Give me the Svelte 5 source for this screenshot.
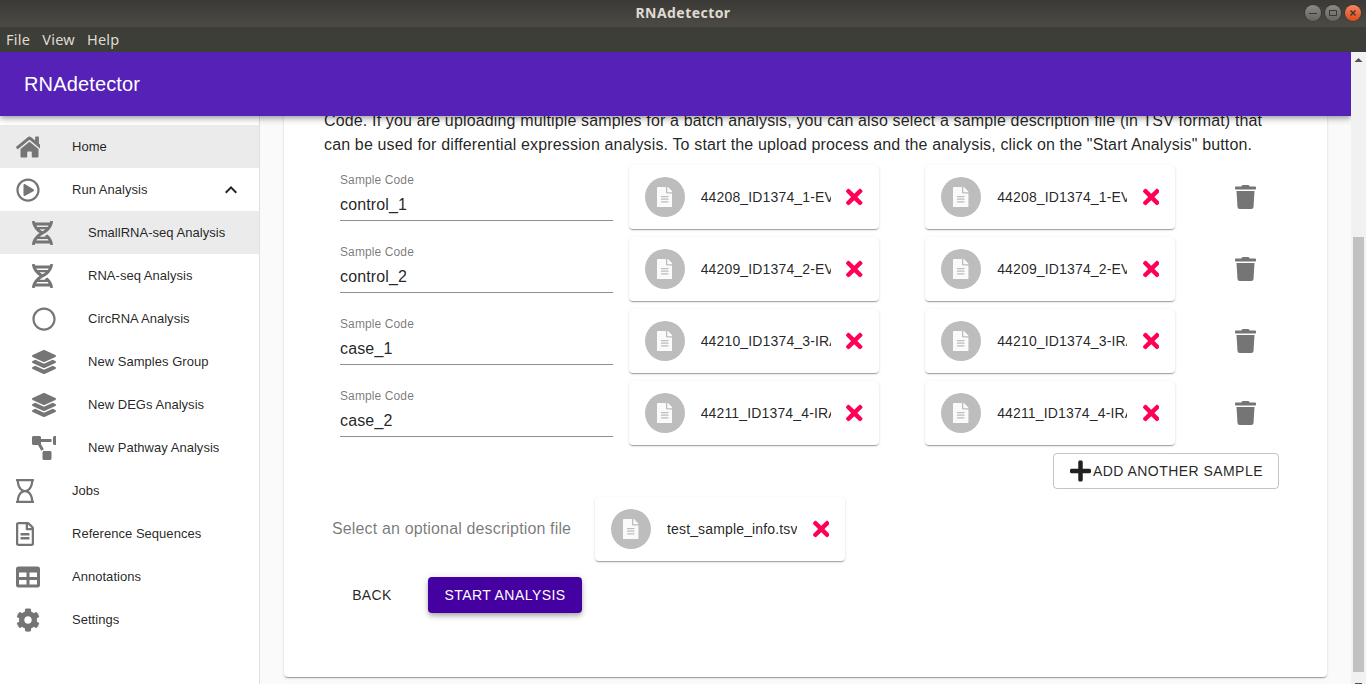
<script>
  const icons = {
    home: [576, 'M280.37 148.26L96 300.11V464a16 16 0 0 0 16 16l112.06-.29a16 16 0 0 0 15.92-16V368a16 16 0 0 1 16-16h64a16 16 0 0 1 16 16v95.64a16 16 0 0 0 16 16.05L464 480a16 16 0 0 0 16-16V300L295.67 148.26a12.19 12.19 0 0 0-15.3 0zM571.6 251.47L488 182.56V44.05a12 12 0 0 0-12-12h-56a12 12 0 0 0-12 12v72.61L318.47 43a48 48 0 0 0-61 0L4.34 251.47a12 12 0 0 0-1.6 16.9l25.5 31A12 12 0 0 0 45.15 301l235.22-193.74a12.19 12.19 0 0 1 15.3 0L530.9 301a12 12 0 0 0 16.9-1.6l25.5-31a12 12 0 0 0-1.7-16.93z'],
    play: [512, 'M371.7 238l-176-107c-15.8-8.8-35.7 2.5-35.7 21v208c0 18.4 19.8 29.8 35.7 21l176-101c16.4-9.1 16.4-32.8 0-42zM504 256C504 119 393 8 256 8S8 119 8 256s111 248 248 248 248-111 248-248zm-448 0c0-110.5 89.5-200 200-200s200 89.5 200 200-89.5 200-200 200S56 366.5 56 256z'],
    dna: [448, 'M.1 494.1c-1.1 9.5 6.3 17.8 15.9 17.8l32.3.1c8.1 0 14.9-5.9 16-13.9.7-4.9 1.8-11.1 3.4-18.1H380c1.6 6.9 2.9 13.2 3.5 18.1 1.1 8 7.9 14 16 13.9l32.3-.1c9.6 0 17.1-8.3 15.9-17.8-4.6-37.9-25.6-129-118.9-207.7-17.6 12.4-37.1 24.2-58.5 35.4 6.2 4.6 11.4 9.4 17 14.2H159.7c21.3-18.1 47-35.6 78.7-51.4C410.5 199.1 442.1 65.8 447.9 17.9 449 8.4 441.6.1 432 .1L399.6 0c-8.1 0-14.9 5.9-16 13.9-.7 4.9-1.8 11.1-3.4 18.1H67.8c-1.6-7-2.7-13.1-3.4-18.1-1.1-8-7.9-14-16-13.9L16.1.1C6.5.1-1 8.4.1 17.9 5.3 60.8 31.4 171.8 160 256 31.5 340.2 5.3 451.2.1 494.1zM224 219.6c-25.1-13.7-46.4-28.4-64.3-43.6h128.5c-17.8 15.2-39.1 30-64.2 43.6zM355.1 96c-5.8 10.4-12.8 21.1-21 32H114c-8.3-10.9-15.3-21.6-21-32h262.1zM92.9 416c5.8-10.4 12.8-21.1 21-32h219.4c8.3 10.9 15.4 21.6 21.2 32H92.9z'],
    circle: [512, 'M256 8C119 8 8 119 8 256s111 248 248 248 248-111 248-248S393 8 256 8zm0 448c-110.5 0-200-89.5-200-200S145.5 56 256 56s200 89.5 200 200-89.5 200-200 200z'],
    layers: [512, 'M12.41 148.02l232.94 105.67c6.8 3.09 14.49 3.09 21.29 0l232.94-105.67c16.55-7.51 16.55-32.52 0-40.03L266.65 2.31a25.607 25.607 0 0 0-21.29 0L12.41 107.98c-16.55 7.51-16.55 32.53 0 40.04zm487.18 88.28l-58.09-26.33-161.64 73.27c-7.56 3.43-15.59 5.17-23.86 5.17s-16.29-1.74-23.86-5.17L70.51 209.97l-58.1 26.33c-16.55 7.5-16.55 32.5 0 40l232.94 105.59c6.8 3.08 14.49 3.08 21.29 0L499.59 276.3c16.55-7.5 16.55-32.5 0-40zm0 127.8l-57.87-26.23-161.86 73.37c-7.56 3.43-15.59 5.17-23.86 5.17s-16.29-1.74-23.86-5.17L70.29 337.87 12.41 364.1c-16.55 7.5-16.55 32.5 0 40l232.94 105.59c6.8 3.08 14.49 3.08 21.29 0L499.59 404.1c16.55-7.5 16.55-32.5 0-40z'],
    diagram: [640, 'M384 320H256c-17.67 0-32 14.33-32 32v128c0 17.67 14.33 32 32 32h128c17.67 0 32-14.33 32-32V352c0-17.67-14.33-32-32-32zM192 32c0-17.67-14.33-32-32-32H32C14.33 0 0 14.33 0 32v128c0 17.67 14.33 32 32 32h95.72l73.16 128.04C211.98 300.98 232.4 288 256 288h.28L192 175.51V128h224V64H192V32zM608 0H480c-17.67 0-32 14.33-32 32v128c0 17.67 14.33 32 32 32h128c17.67 0 32-14.33 32-32V32c0-17.67-14.33-32-32-32z'],
    hourglass: [384, 'M368 48h4c6.627 0 12-5.373 12-12V12c0-6.627-5.373-12-12-12H12C5.373 0 0 5.373 0 12v24c0 6.627 5.373 12 12 12h4c0 80.564 32.188 165.807 97.18 208C47.899 298.381 16 383.9 16 464h-4c-6.627 0-12 5.373-12 12v24c0 6.627 5.373 12 12 12h360c6.627 0 12-5.373 12-12v-24c0-6.627-5.373-12-12-12h-4c0-80.564-32.188-165.807-97.18-208C336.102 213.619 368 128.1 368 48zM64 48h256c0 101.62-57.307 184-128 184S64 149.621 64 48zm256 416H64c0-101.62 57.308-184 128-184s128 82.38 128 184z'],
    fileLine: [384, 'M288 248v28c0 6.6-5.4 12-12 12H108c-6.6 0-12-5.4-12-12v-28c0-6.6 5.4-12 12-12h168c6.6 0 12 5.4 12 12zm-12 72H108c-6.6 0-12 5.4-12 12v28c0 6.6 5.4 12 12 12h168c6.6 0 12-5.4 12-12v-28c0-6.6-5.4-12-12-12zm108-188.1V464c0 26.5-21.5 48-48 48H48c-26.5 0-48-21.5-48-48V48C0 21.5 21.5 0 48 0h204.1C264.8 0 277 5.1 286 14.1L369.9 98c9 8.9 14.1 21.2 14.1 33.9zm-128-80V128h76.1L256 51.9zM336 464V176H232c-13.3 0-24-10.7-24-24V48H48v416h288z'],
    table: [512, 'M464 32H48C21.49 32 0 53.49 0 80v352c0 26.51 21.49 48 48 48h416c26.51 0 48-21.49 48-48V80c0-26.51-21.49-48-48-48zM224 416H64v-96h160v96zm0-160H64v-96h160v96zm224 160H288v-96h160v96zm0-160H288v-96h160v96z'],
    cog: [512, 'M487.4 315.7l-42.6-24.6c4.3-23.2 4.3-47 0-70.2l42.6-24.6c4.9-2.8 7.1-8.6 5.5-14-11.1-35.6-30-67.8-54.7-94.6-3.8-4.1-10-5.1-14.8-2.3L380.8 110c-17.9-15.4-38.5-27.3-60.8-35.1V25.8c0-5.6-3.9-10.5-9.4-11.7-36.7-8.2-74.3-7.8-109.2 0-5.5 1.2-9.4 6.1-9.4 11.7V75c-22.2 7.9-42.8 19.8-60.8 35.1L88.7 85.5c-4.9-2.8-11-1.9-14.8 2.3-24.7 26.7-43.6 58.9-54.7 94.6-1.7 5.4.6 11.2 5.5 14L67.3 221c-4.3 23.2-4.3 47 0 70.2l-42.6 24.6c-4.9 2.8-7.1 8.6-5.5 14 11.1 35.6 30 67.8 54.7 94.6 3.8 4.1 10 5.1 14.8 2.3l42.6-24.6c17.9 15.4 38.5 27.3 60.8 35.1v49.2c0 5.6 3.9 10.5 9.4 11.7 36.7 8.2 74.3 7.8 109.2 0 5.5-1.2 9.4-6.1 9.4-11.7v-49.2c22.2-7.9 42.8-19.8 60.8-35.1l42.6 24.6c4.9 2.8 11 1.9 14.8-2.3 24.7-26.7 43.6-58.9 54.7-94.6 1.5-5.5-.7-11.3-5.6-14.1zM256 336c-44.1 0-80-35.9-80-80s35.9-80 80-80 80 35.9 80 80-35.9 80-80 80z'],
    trash: [448, 'M432 32H312l-9.4-18.7A24 24 0 0 0 281.1 0H166.8a23.72 23.72 0 0 0-21.4 13.3L136 32H16A16 16 0 0 0 0 48v32a16 16 0 0 0 16 16h416a16 16 0 0 0 16-16V48a16 16 0 0 0-16-16zM53.2 467a48 48 0 0 0 47.9 45h245.8a48 48 0 0 0 47.9-45L416 128H32z'],
    plus: [448, 'M416 208H272V64c0-17.67-14.33-32-32-32h-32c-17.67 0-32 14.33-32 32v144H32c-17.67 0-32 14.33-32 32v32c0 17.67 14.33 32 32 32h144v144c0 17.67 14.33 32 32 32h32c17.67 0 32-14.33 32-32V304h144c17.67 0 32-14.33 32-32v-32c0-17.67-14.33-32-32-32z'],
    times: [352, 'M242.72 256l100.07-100.07c12.28-12.28 12.28-32.19 0-44.48l-22.24-22.24c-12.28-12.28-32.19-12.28-44.48 0L176 189.28 75.93 89.21c-12.28-12.28-32.19-12.28-44.48 0L9.21 111.45c-12.28 12.28-12.28 32.19 0 44.48L109.28 256 9.21 356.07c-12.28 12.28-12.28 32.19 0 44.48l22.24 22.24c12.28 12.28 32.2 12.28 44.48 0L176 322.72l100.07 100.07c12.28 12.28 32.2 12.28 44.48 0l22.24-22.24c12.28-12.28 12.28-32.19 0-44.48L242.72 256z'],
    file: [384, 'M224 136V0H24C10.7 0 0 10.7 0 24v464c0 13.3 10.7 24 24 24h336c13.3 0 24-10.7 24-24V160H248c-13.2 0-24-10.8-24-24zm64 236c0 6.6-5.4 12-12 12H108c-6.6 0-12-5.4-12-12v-8c0-6.6 5.4-12 12-12h168c6.6 0 12 5.4 12 12v8zm0-64c0 6.6-5.4 12-12 12H108c-6.6 0-12-5.4-12-12v-8c0-6.6 5.4-12 12-12h168c6.6 0 12 5.4 12 12v8zm0-72v8c0 6.6-5.4 12-12 12H108c-6.6 0-12-5.4-12-12v-8c0-6.6 5.4-12 12-12h168c6.6 0 12 5.4 12 12zm96-114.1v6.1H256V0h6.1c6.4 0 12.5 2.5 17 7l97.9 98c4.5 4.5 7 10.6 7 16.9z'],
  };

  const nav = [
    { label: 'Home', icon: 'home', active: true },
    { label: 'Run Analysis', icon: 'play', open: true },
    { label: 'SmallRNA-seq Analysis', icon: 'dna', sub: true, active: true },
    { label: 'RNA-seq Analysis', icon: 'dna', sub: true },
    { label: 'CircRNA Analysis', icon: 'circle', sub: true },
    { label: 'New Samples Group', icon: 'layers', sub: true },
    { label: 'New DEGs Analysis', icon: 'layers', sub: true },
    { label: 'New Pathway Analysis', icon: 'diagram', sub: true },
    { label: 'Jobs', icon: 'hourglass' },
    { label: 'Reference Sequences', icon: 'fileLine' },
    { label: 'Annotations', icon: 'table' },
    { label: 'Settings', icon: 'cog' },
  ];

  const samples = [
    { code: 'control_1', file: '44208_ID1374_1-EV' },
    { code: 'control_2', file: '44209_ID1374_2-EV' },
    { code: 'case_1', file: '44210_ID1374_3-IRA' },
    { code: 'case_2', file: '44211_ID1374_4-IRA' },
  ];
</script>

{#snippet icon(name, size = 24)}
  <svg class="icon" viewBox="0 0 {icons[name][0]} 512" width={(icons[name][0] / 512) * size} height={size} aria-hidden="true">
    <path d={icons[name][1]} />
  </svg>
{/snippet}

{#snippet fileCard(name)}
  <div class="file-card">
    <span class="avatar">{@render icon('file', 20.6)}</span>
    <span class="file-name">{name}</span>
    <span class="remove">{@render icon('times')}</span>
  </div>
{/snippet}

<div class="window">
  <div class="titlebar">
    <span></span>
    <span class="title">RNAdetector</span>
    <div class="controls">
      <span class="control"><svg viewBox="0 0 16 16"><path d="M4 8.5h8" /></svg></span>
      <span class="control"><svg viewBox="0 0 16 16"><path d="M4.500 5.500h7v5h-7z" /></svg></span>
      <span class="control close"><svg viewBox="0 0 16 16"><path d="M5.500 5.500l5 5m0-5l-5 5" /></svg></span>
    </div>
  </div>
  <div class="menubar"><span>File</span><span>View</span><span>Help</span></div>

  <div class="content">
    <div class="view">
      <header>RNAdetector</header>
      <div class="columns">
        <nav>
          {#each nav as item}
            <div class="nav-item" class:sub={item.sub} class:active={item.active}>
              <span class="nav-icon">{@render icon(item.icon)}</span>
              <span class="nav-label">{item.label}</span>
              {#if item.open}
                <svg class="chevron" viewBox="0 0 24 24" width="24" height="24"><path d="M12 8l-6 6 1.410 1.410L12 10.830l4.590 4.580L18 14z" /></svg>
              {/if}
            </div>
          {/each}
        </nav>
        <main>
          <section class="paper">
            <p>Code. If you are uploading multiple samples for a batch analysis, you can also select a sample description file (in TSV format) that<br />can be used for differential expression analysis. To start the upload process and the analysis, click on the "Start Analysis" button.</p>
            {#each samples as s}
              <div class="row">
                <div class="field">
                  <span class="label">Sample Code</span>
                  <span class="value">{s.code}</span>
                </div>
                {@render fileCard(s.file)}
                {@render fileCard(s.file)}
                <span class="trash">{@render icon('trash')}</span>
              </div>
            {/each}
            <div class="add-row">
              <button class="add">{@render icon('plus')}ADD ANOTHER SAMPLE</button>
            </div>
            <div class="description">
              <span>Select an optional description file</span>
              {@render fileCard('test_sample_info.tsv')}
            </div>
            <div class="actions">
              <button class="back">BACK</button>
              <button class="start">START ANALYSIS</button>
            </div>
          </section>
        </main>
      </div>
    </div>
    <div class="scrollbar">
      <svg width="15" height="15" viewBox="0 0 15 15"><path d="M3.500 10h8L7.500 6z" /></svg>
      <span class="thumb"></span>
      <span class="down"></span>
    </div>
  </div>
</div>

<style>
  :global(body) { margin: 0; overflow: hidden; }
  .window {
    display: flex; flex-direction: column; width: 1366px; height: 684px; overflow: hidden;
    font-family: "Liberation Sans", Arial, sans-serif; color: rgba(0, 0, 0, 0.87);
  }
  .icon { display: block; flex: none; fill: currentColor; }

  .titlebar {
    flex: none; height: 27px; display: grid; grid-template-columns: 1fr auto 1fr; align-items: center;
    background: linear-gradient(#3b3a36, #4b4a44);
  }
  .title { font: bold 14px/26px "Noto Sans", sans-serif; color: #dfdbd2; letter-spacing: 0.45px; margin-top: -2px; }
  .controls { display: flex; justify-content: flex-end; gap: 4px; padding-right: 5px; margin-top: -1px; }
  .control {
    width: 16px; height: 16px; border-radius: 50%; box-shadow: 0 0 0 0.5px #2d2c29;
    background: linear-gradient(#8c8a83, #66655f);
  }
  .control svg { display: block; width: 16px; height: 16px; fill: none; stroke: #393832; stroke-width: 1; }
  .control.close { background: linear-gradient(#f58660, #e0491a); }
  .close svg { stroke-width: 1.4; }
  .menubar {
    flex: none; height: 25px; display: flex; gap: 12px; padding-left: 6px; background: #3d3e37;
    font: 14.5px/25px "Noto Sans", sans-serif; letter-spacing: 0.25px; color: #dfdbd2;
  }

  .content { flex: 1; min-height: 0; display: flex; }
  .view { width: 1351px; display: flex; flex-direction: column; overflow: hidden; }
  header {
    flex: none; position: relative; z-index: 2; height: 64px; box-sizing: border-box; padding-left: 24px;
    background: #5521b7; color: #fff; font-size: 20px; line-height: 64px; letter-spacing: 0.15px;
    box-shadow: 0 2px 4px -1px rgba(0, 0, 0, 0.2), 0 4px 5px 0 rgba(0, 0, 0, 0.14), 0 1px 10px 0 rgba(0, 0, 0, 0.12);
  }
  .columns { flex: 1; min-height: 0; display: flex; background: #fafafa; }
  nav { flex: none; width: 259px; padding-top: 9px; background: #fff; border-right: 1px solid #e0e0e0; }
  .nav-item { height: 43px; display: flex; align-items: center; padding: 0 16px; }
  .nav-item.sub { padding-left: 32px; }
  .nav-item.active { background: #ebebeb; }
  .nav-icon { width: 24px; overflow: hidden; margin-right: 32px; color: #757575; }
  .nav-label { flex: 1; font-size: 13px; letter-spacing: 0.03px; white-space: nowrap; }
  .chevron { fill: rgba(0, 0, 0, 0.87); }

  main {
    flex: 1; min-width: 0; display: flex; flex-direction: column; justify-content: flex-end;
    padding: 0 24px 7px; overflow: hidden;
  }
  .paper {
    flex: none; padding: 40px 40px 64px; background: #fff; border-radius: 4px;
    box-shadow: 0 2px 1px -1px rgba(0, 0, 0, 0.2), 0 1px 1px 0 rgba(0, 0, 0, 0.14), 0 1px 3px 0 rgba(0, 0, 0, 0.12);
  }
  p { margin: 0 0 4px; font-size: 16px; line-height: 24px; letter-spacing: 0.15px; white-space: nowrap; }
  .row {
    height: 72px; padding-left: 16px; display: grid; align-items: center;
    grid-template-columns: 288.67px 296.5px 310.1px auto;
  }
  .field { width: 273px; height: 48px; box-sizing: border-box; display: flex; flex-direction: column; border-bottom: 1px solid #8f8f8f; }
  .label { font-size: 12px; line-height: 14px; letter-spacing: 0.11px; color: rgba(0, 0, 0, 0.54); }
  .value { font-size: 16px; line-height: 19px; margin-top: 8px; letter-spacing: 0.15px; }
  .file-card {
    width: 250px; height: 64px; box-sizing: border-box; padding: 0 16px; display: flex; align-items: center;
    background: #fff; border-radius: 4px;
    box-shadow: 0 2px 1px -1px rgba(0, 0, 0, 0.2), 0 1px 1px 0 rgba(0, 0, 0, 0.14), 0 1px 3px 0 rgba(0, 0, 0, 0.12);
  }
  .avatar {
    flex: none; width: 40px; height: 40px; margin-right: 16px; border-radius: 50%; background: #bdbdbd; color: #fafafa;
    display: flex; align-items: center; justify-content: center;
  }
  .file-name { flex: none; width: 130px; margin-right: 15.5px; overflow: hidden; white-space: nowrap; font-size: 14px; line-height: 20px; letter-spacing: 0.15px; }
  .remove { color: #ff0055; }
  .trash { color: #757575; }
  .add-row { display: flex; justify-content: flex-end; padding: 4px 8px 8px 0; }
  button {
    height: 36px; box-sizing: border-box; margin: 0; border: 0; border-radius: 4px; background: none; padding: 0 16px;
    font: 14px/24px "Liberation Sans", Arial, sans-serif; letter-spacing: 0.4px; color: rgba(0, 0, 0, 0.87); white-space: nowrap;
  }
  .add { width: 226px; display: flex; align-items: center; gap: 2px; border: 1px solid rgba(0, 0, 0, 0.23); padding: 0 0 0 16px; letter-spacing: 0.45px; }
  .description { display: flex; align-items: center; padding-left: 8px; color: rgba(0, 0, 0, 0.54); font-size: 16px; letter-spacing: 0.15px; }
  .description > span { width: 263px; white-space: nowrap; }
  .description .file-card { color: rgba(0, 0, 0, 0.87); }
  .actions { display: flex; padding: 16px 0 0 12px; gap: 20px; }
  .back { width: 72px; }
  .start {
    width: 154px; background: #4400a0; color: #fff; letter-spacing: 0.45px; padding: 0;
    box-shadow: 0 2px 4px -1px rgba(0, 0, 0, 0.2), 0 4px 5px 0 rgba(0, 0, 0, 0.14), 0 1px 10px 0 rgba(0, 0, 0, 0.12);
  }

  .scrollbar { width: 15px; display: flex; flex-direction: column; align-items: center; background: #f1f1f1; }
  .scrollbar svg { fill: #505050; }
  .thumb { width: 11px; height: 435px; margin-top: 170px; background: #c1c1c1; }
  .down { width: 7px; height: 1px; margin-top: 11px; background: #505050; }
</style>
